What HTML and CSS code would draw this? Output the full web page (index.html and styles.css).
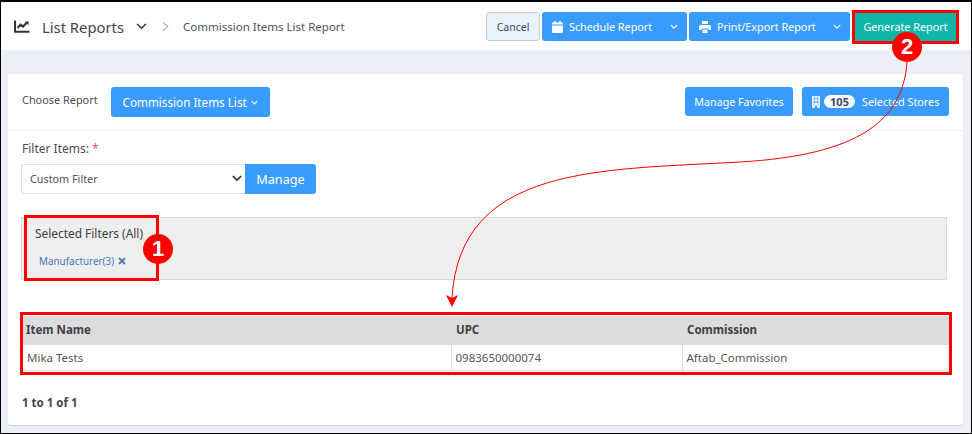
FILE: index.html
```html
<!DOCTYPE html>
<html lang="en">
<head>
<meta charset="utf-8">
<title>Commission Items List Report</title>
<link rel="stylesheet" href="styles.css">
</head>
<body>
<div class="shot">
  <header class="topbar">
    <div class="crumbs">
      <svg class="chart-icon" viewBox="0 0 16 13" width="16" height="13"><path d="M1 0.500V11.800H15.500" fill="none" stroke="#333" stroke-width="2"/><path d="M3.500 8L6.500 4.800L9 6.600L13 2.500" fill="none" stroke="#333" stroke-width="2.200"/><path d="M10.800 1.400H14.600V5.200Z" fill="#333"/></svg>
      <span class="crumb-title">List Reports</span>
      <svg class="crumb-caret" viewBox="0 0 12 8" width="11" height="7"><path d="M1 1.200L6 6L11 1.200" fill="none" stroke="#333" stroke-width="1.800"/></svg>
      <svg class="crumb-sep" viewBox="0 0 8 12" width="7" height="11"><path d="M1 1L6.500 6L1 11" fill="none" stroke="#b4b6bd" stroke-width="1.500"/></svg>
      <span class="crumb-page">Commission Items List Report</span>
    </div>
    <div class="actions">
      <button class="btn btn-cancel">Cancel</button>
      <div class="split">
        <svg class="btn-icon" viewBox="0 0 11 12" width="11" height="12"><path d="M0 4.500H11V11a1 1 0 0 1-1 1H1a1 1 0 0 1-1-1ZM0 3.500V2.500a1 1 0 0 1 1-1H2.200V0H3.800V1.500H7.200V0H8.800V1.500H10a1 1 0 0 1 1 1V3.500Z" fill="#fff"/></svg>
        <span>Schedule Report</span>
        <svg class="split-caret" viewBox="0 0 10 6" width="8" height="5"><path d="M1 1L5 5L9 1" fill="none" stroke="#fff" stroke-width="1.500"/></svg>
      </div>
      <div class="split split-print">
        <svg class="btn-icon" viewBox="0 0 12 12" width="12" height="12"><path d="M3 0H9V3H3ZM1.500 4H10.500a1.500 1.500 0 0 1 1.500 1.500V9H9.500V7.500H2.500V9H0V5.500A1.500 1.500 0 0 1 1.500 4ZM3.500 8.500H8.500V12H3.500Z" fill="#fff"/></svg>
        <span>Print/Export Report</span>
        <svg class="split-caret" viewBox="0 0 10 6" width="8" height="5"><path d="M1 1L5 5L9 1" fill="none" stroke="#fff" stroke-width="1.500"/></svg>
      </div>
      <button class="btn btn-generate">Generate Report</button>
    </div>
  </header>

  <main class="card">
    <section class="card-head">
      <div class="choose">
        <span class="choose-label">Choose Report</span>
        <button class="btn btn-blue btn-choose">Commission Items List <svg viewBox="0 0 10 6" width="7" height="5"><path d="M1 1L5 5L9 1" fill="none" stroke="#fff" stroke-width="1.500"/></svg></button>
      </div>
      <div class="head-right">
        <button class="btn btn-blue btn-fav">Manage Favorites</button>
        <button class="btn btn-blue btn-stores">
          <svg viewBox="0 0 8 12" width="8" height="12"><path d="M0 0H8V12H5V10H3V12H0Z" fill="#d8eaff"/><path d="M2 1.500H3.200V3.500H2ZM4.800 1.500H6V3.500H4.800ZM2 5H3.200V7H2ZM4.800 5H6V7H4.800Z" fill="#3a9bff"/></svg>
          <span class="pill">105</span>
          <span>Selected Stores</span>
        </button>
      </div>
    </section>

    <section class="filters">
      <div class="filter-label">Filter Items: <span class="req">*</span></div>
      <div class="filter-row">
        <div class="select"><span>Custom Filter</span><svg viewBox="0 0 12 8" width="10" height="7"><path d="M1 1.200L6 6L11 1.200" fill="none" stroke="#333" stroke-width="2"/></svg></div>
        <button class="btn btn-blue btn-manage">Manage</button>
      </div>
      <div class="selected">
        <div class="selected-title">Selected Filters (All)</div>
        <div class="tag">Manufacturer(3) <svg viewBox="0 0 8 8" width="8" height="8"><path d="M1 1L7 7M7 1L1 7" stroke="#4a78b8" stroke-width="1.800"/></svg></div>
      </div>
    </section>

    <table class="grid">
      <thead>
        <tr><th class="col-name">Item Name</th><th class="col-upc">UPC</th><th>Commission</th></tr>
      </thead>
      <tbody>
        <tr><td>Mika Tests</td><td>0983650000074</td><td>Aftab_Commission</td></tr>
      </tbody>
    </table>
    <div class="pager">1 to 1 of 1</div>
  </main>

  <div class="mark mark-generate"></div>
  <div class="mark mark-filters"></div>
  <div class="mark mark-table"></div>
  <svg class="curve" viewBox="0 0 972 434" width="972" height="434">
    <path d="M907 62C903 120 860 155 740 162C600 170 460 165 452 298" fill="none" stroke="#f00" stroke-width="1"/>
    <path d="M446 295L452 298L458 295L452 307Z" fill="#f00"/>
  </svg>
  <div class="badge badge-one">1</div>
  <div class="badge badge-two">2</div>
</div>
</body>
</html>
```
FILE: styles.css
```css
* { box-sizing: border-box; }
html, body { margin: 0; padding: 0; }
body { font-family: "Noto Sans", "Open Sans", sans-serif; color: #3f4047; }
.shot {
  position: relative;
  width: 972px;
  height: 434px;
  overflow: hidden;
  border: 1px solid #000;
  border-top-width: 2px;
  background: linear-gradient(#e4e6f0, #eceff6 60px);
}
.topbar {
  height: 48px;
  background: #fff;
  display: flex;
  justify-content: space-between;
  align-items: flex-start;
  padding: 10px 0 0 13px;
}
.crumbs { display: flex; align-items: center; height: 29px; }
.chart-icon { margin-right: 12px; }
.crumb-title { font-size: 14.800px; color: #45464d; margin-right: 12px; }
.crumb-caret { margin-right: 15px; }
.crumb-sep { margin-right: 14px; }
.crumb-page { font-size: 11.500px; color: #50515a; }
.actions { display: flex; gap: 2px; padding-right: 15px; height: 29px; }
.btn {
  border: 0;
  padding: 0;
  font-family: inherit;
  border-radius: 3px;
  color: #fff;
}
.btn-cancel {
  width: 54px;
  height: 29px;
  background: #e9f1fa;
  border: 1px solid #c5ccd5;
  color: #3f4a5a;
  font-size: 10.500px;
}
.split {
  display: flex;
  align-items: center;
  height: 29px;
  width: 145px;
  padding-left: 10px;
  gap: 6px;
  background: #3a9bff;
  border-radius: 3px;
  color: #fff;
  font-size: 10.800px;
}
.split-print { width: 161px; }
.split-caret { margin-left: auto; margin-right: 9px; }
.btn-generate {
  width: 101px;
  height: 29px;
  margin-left: 3px;
  background: #0fb5a7;
  font-size: 10.800px;
  border-radius: 0;
}
.card {
  margin: 24px 0 0 7px;
  width: 955px;
  height: 351px;
  background: #fff;
  border-radius: 3px;
  box-shadow: 0 1px 1px rgba(120,130,160,.25);
}
.card-head {
  height: 57px;
  border-bottom: 1px solid #ebedf2;
  display: flex;
  justify-content: space-between;
  padding: 13px 14px 0 14px;
}
.choose { display: flex; gap: 13px; }
.choose-label { font-size: 10.900px; line-height: 26px; color: #4a4b52; }
.btn-blue { background: #3a9bff; }
.btn-choose {
  width: 159px;
  height: 30px;
  font-size: 11.700px;
  display: flex;
  align-items: center;
  justify-content: center;
  gap: 4px;
}
.head-right { display: flex; gap: 9px; }
.btn-fav { width: 108px; height: 29px; font-size: 10.700px; }
.btn-stores {
  width: 147px;
  height: 29px;
  display: flex;
  align-items: center;
  gap: 4px;
  padding-left: 10px;
  font-size: 10.800px;
}
.pill {
  background: #fff;
  color: #3a4a60;
  font-weight: 700;
  font-size: 11px;
  line-height: 13px;
  width: 31px;
  text-align: center;
  border-radius: 7px;
  margin-right: 3px;
}
.filters { padding: 9px 14px 0 13px; }
.filter-label { font-size: 12px; line-height: 17px; color: #4a4b52; padding-left: 1px; }
.req { color: #f4516c; }
.filter-row { display: flex; margin-top: 7px; }
.select {
  width: 224px;
  height: 30px;
  border: 1px solid #dfe1e6;
  border-right: 0;
  border-radius: 3px 0 0 3px;
  display: flex;
  align-items: center;
  justify-content: space-between;
  padding: 0 3px 2px 8px;
  font-size: 10.800px;
  color: #4f5058;
}
.btn-manage {
  width: 71px;
  height: 30px;
  border-radius: 0 3px 3px 0;
  font-size: 12.700px;
}
.selected {
  margin-top: 23px;
  width: 926px;
  height: 63px;
  background: #eee;
  border: 1px solid #dcdcdc;
  padding: 7px 13px;
}
.selected-title { font-size: 11.900px; line-height: 17px; color: #3c3d44; }
.tag { margin-top: 12px; font-size: 9.900px; line-height: 14px; color: #4a78b8; padding-left: 4px; display: flex; align-items: center; gap: 4px; }
.grid {
  margin: 36px 0 0 15px;
  width: 926px;
  border-collapse: collapse;
  table-layout: fixed;
  font-size: 11.500px;
}
.grid th {
  height: 29px;
  background: #dcdcdc;
  text-align: left;
  font-size: 11.500px;
  font-weight: 700;
  color: #3f4047;
  padding: 0 4px 3px 5px;
}
.grid th:first-child { padding-left: 3px; }
.grid td {
  height: 25px;
  border: 1px solid #dedede;
  border-top: 0;
  padding: 0 4px;
  color: #55565c;
  font-size: 11.500px;
}
.grid td:first-child { border-left: 0; }
.grid td:last-child { border-right: 0; }
.col-name { width: 428px; }
.col-upc { width: 231px; }
.pager { margin: 23px 0 0 14px; font-size: 11.500px; font-weight: 700; color: #45464d; line-height: 17px; }

.mark { position: absolute; border: 3px solid #f00; }
.mark-generate { left: 851px; top: 8px; width: 107px; height: 34px; }
.mark-filters { left: 23px; top: 213px; width: 135px; height: 66px; }
.mark-table { left: 19px; top: 310px; width: 932px; height: 63px; }
.curve { position: absolute; left: -1px; top: -2px; }
.badge {
  position: absolute;
  width: 30px;
  height: 30px;
  border-radius: 50%;
  background: #f00;
  color: #fff;
  font-family: "Liberation Sans", sans-serif;
  font-weight: 700;
  font-size: 22px;
  line-height: 30px;
  text-align: center;
}
.badge-one { left: 142px; top: 232px; }
.badge-two { left: 891px; top: 30px; }
```
